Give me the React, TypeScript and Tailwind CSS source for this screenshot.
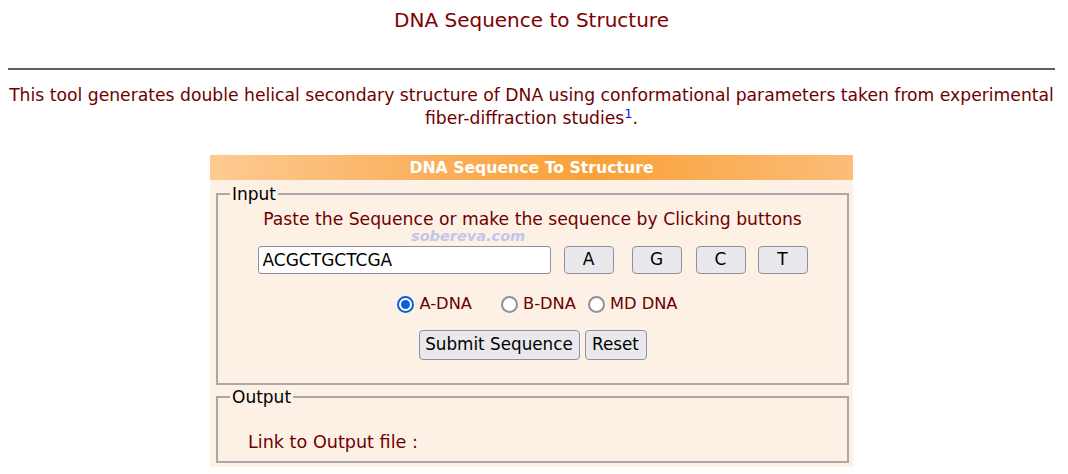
import { useState } from 'react'

const BASES = ['A', 'G', 'C', 'T']

function Radio({ checked, label, onSelect }: { checked: boolean; label: string; onSelect: () => void }) {
  return (
    <label className="flex cursor-pointer items-center" onClick={onSelect}>
      <span
        className={
          checked
            ? 'flex h-[17px] w-[17px] items-center justify-center rounded-full border-2 border-[#0b5fd8] bg-white'
            : 'flex h-[17px] w-[17px] items-center justify-center rounded-full border-2 border-[#8f8f9d] bg-white'
        }
      >
        {checked && <span className="h-[9px] w-[9px] rounded-full bg-[#0b5fd8]" />}
      </span>
      <span className="ml-[5px]">{label}</span>
    </label>
  )
}

export default function App() {
  const [seq, setSeq] = useState('ACGCTGCTCGA')
  const [form, setForm] = useState('A')

  return (
    <div className="min-h-screen bg-white font-['DejaVu_Sans',sans-serif] text-[#800000]">
      <div className="pl-2 pr-[13px]">
        <h1 className="pt-2 text-center text-[20px] leading-6 text-[#800000]">DNA Sequence to Structure</h1>
        <hr className="mt-9 border-0 border-t-2 border-[#5e5e5e]" />
        <p className="mt-[14px] text-center text-[17.2px] leading-[23px] text-[#6e0000]">
          This tool generates double helical secondary structure of DNA using conformational parameters taken from
          experimental
          <br />
          fiber-diffraction studies
          <sup className="text-[#1a1aee]">1</sup>.
        </p>

        <div className="mx-auto mt-[25px] w-[643px]">
          <div className="flex h-[25px] items-center justify-center bg-[linear-gradient(90deg,#fdcb92_0%,#faaf5c_35%,#f9a139_60%,#fbbd78_100%)] text-[15.7px] font-bold text-white">
            DNA Sequence To Structure
          </div>

          <div className="relative bg-[#fdf1e6] pb-1 pl-[6px] pr-1 pt-[5px]">
            <fieldset className="border-2 border-[#a9a9a9] px-3 pb-[23px]">
              <legend className="px-[2px] text-[17px] leading-[18px] text-black">Input</legend>
              <div className="mt-[5px] text-center text-[17.2px] leading-[22px] text-[#6e0000]">
                Paste the Sequence or make the sequence by Clicking buttons
              </div>
              <div className="mt-4 flex h-7 items-center justify-center">
                <input
                  value={seq}
                  onChange={(e) => setSeq(e.target.value)}
                  className="h-7 w-[293px] rounded-[3px] border border-[#8f8f9d] bg-white px-1 text-[17px] text-black outline-none"
                />
                {BASES.map((b, i) => (
                  <button
                    key={b}
                    type="button"
                    onClick={() => setSeq(seq + b)}
                    className={
                      'h-7 w-[50px] rounded-[4px] border border-[#8f8f9d] bg-[#e9e9ed] text-[17px] text-black ' +
                      (i === 0 ? 'ml-[13px]' : i === 1 ? 'ml-[18px]' : i === 2 ? 'ml-[14px]' : 'ml-3')
                    }
                  >
                    {b}
                  </button>
                ))}
              </div>
              <div className="mt-[19px] flex h-[22px] items-center justify-center pl-[10px] text-[16.3px] text-[#6e0000]">
                <Radio checked={form === 'A'} label="A-DNA" onSelect={() => setForm('A')} />
                <span className="w-[29px]" />
                <Radio checked={form === 'B'} label="B-DNA" onSelect={() => setForm('B')} />
                <span className="w-[12px]" />
                <Radio checked={form === 'MD'} label="MD DNA" onSelect={() => setForm('MD')} />
              </div>
              <div className="mt-[15px] flex justify-center gap-[5px]">
                <button
                  type="button"
                  className="h-[30px] w-[161px] rounded-[4px] border border-[#8f8f9d] bg-[#e9e9ed] text-[16.8px] text-black"
                >
                  Submit Sequence
                </button>
                <button
                  type="button"
                  onClick={() => setSeq('')}
                  className="h-[30px] w-[62px] rounded-[4px] border border-[#8f8f9d] bg-[#e9e9ed] text-[16.8px] text-black"
                >
                  Reset
                </button>
              </div>
            </fieldset>

            <fieldset className="mt-[3px] border-2 border-[#a9a9a9] px-3 pb-2">
              <legend className="px-[2px] text-[17px] leading-[18px] text-black">Output</legend>
              <div className="ml-[18px] mt-[25px] text-[17.6px] leading-[22px] text-[#6e0000]">Link to Output file :</div>
            </fieldset>

            <span className="pointer-events-none absolute left-[201px] top-[46px] text-[14.5px] font-bold italic text-[#c4c4ec]">
              sobereva.com
            </span>
          </div>
        </div>
      </div>
    </div>
  )
}
